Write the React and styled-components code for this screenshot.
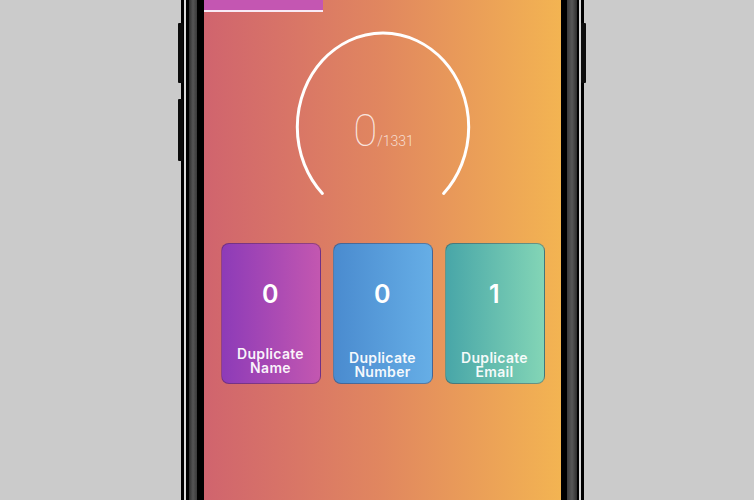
import React from "react";
import styled, { createGlobalStyle } from "styled-components";

const GlobalStyle = createGlobalStyle`
  html, body { margin: 0; padding: 0; background: #cbcbcb; overflow: hidden; }
  body { font-family: "Inter", "Liberation Sans", sans-serif; }
  * { box-sizing: border-box; }
`;

const Stage = styled.div`
  display: flex;
  justify-content: center;
  height: 500px;
  padding-left: 11px;
  overflow: hidden;
`;

const Phone = styled.div`
  position: relative;
  display: flex;
  padding: 0 23px;
  height: 500px;
  background: linear-gradient(
    90deg,
    #000 0 3px,
    #d9d9d9 3px 5px,
    #000 5px 8px,
    #2e2e2e 8px,
    #555 12px,
    #3a3a3a 16px,
    #000 16px 23px,
    transparent 23px calc(100% - 23px),
    #000 calc(100% - 23px) calc(100% - 17px),
    #3a3a3a calc(100% - 17px),
    #585858 calc(100% - 12px),
    #2e2e2e calc(100% - 7px),
    #000 calc(100% - 7px) calc(100% - 5px),
    #d9d9d9 calc(100% - 5px) calc(100% - 3px),
    #000 calc(100% - 3px) 100%
  );
`;

const SideButton = styled.span`
  position: absolute;
  top: ${(p) => p.$top}px;
  height: ${(p) => p.$h}px;
  width: 5px;
  background: #0c0c0c;
  border-radius: 1px;
  ${(p) => (p.$right ? "right: -2px;" : "left: -3px;")}
`;

const Screen = styled.div`
  width: 357px;
  height: 500px;
  display: flex;
  flex-direction: column;
  align-items: center;
  background: linear-gradient(90deg, #d0646e 0%, #e1875f 50%, #f3b452 100%);
`;

const TopBar = styled.div`
  align-self: flex-start;
  width: 119px;
  height: 12px;
  background: #c456b2;
  border-bottom: 2px solid rgba(255, 255, 255, 0.88);
`;

const GaugeWrap = styled.div`
  position: relative;
  margin-top: 18px;
  width: 176px;
  height: 194px;
`;

const GaugeText = styled.div`
  position: absolute;
  top: 79px;
  left: 0;
  right: 0;
  display: flex;
  justify-content: center;
  align-items: baseline;
  font-family: "Roboto", "Lato", sans-serif;
  font-weight: 100;
  line-height: 44px;
  color: rgba(255, 255, 255, 0.8);
  padding-left: 2px;
`;

const Big = styled.span`
  font-size: 44px;
`;

const Small = styled.span`
  font-size: 14px;
  font-weight: 300;
  color: rgba(255, 255, 255, 0.72);
`;

const Cards = styled.div`
  display: flex;
  gap: 12px;
  margin-top: 19px;
`;

const Card = styled.div`
  width: 100px;
  height: 141px;
  border-radius: 8px;
  border: 1px solid rgba(60, 30, 40, 0.35);
  background: ${(p) => p.$bg};
  display: flex;
  flex-direction: column;
  align-items: center;
  padding-top: 38px;
  padding-bottom: ${(p) => p.$pb}px;
  color: #fff;
`;

const Count = styled.div`
  font-size: 25px;
  font-weight: 600;
  line-height: 24px;
  letter-spacing: 0.5px;
`;

const Label = styled.div`
  margin-top: auto;
  font-size: 14px;
  font-weight: 600;
  line-height: 14px;
  letter-spacing: 0.3px;
  text-align: center;
  color: rgba(255, 255, 255, 0.95);
`;

const cards = [
  { n: 0, l1: "Duplicate", l2: "Name", bg: "linear-gradient(90deg, #8d3bb8, #c357b0)", pb: 8 },
  { n: 0, l1: "Duplicate", l2: "Number", bg: "linear-gradient(90deg, #4a8bcf, #66aee6)", pb: 4 },
  { n: 1, l1: "Duplicate", l2: "Email", bg: "linear-gradient(90deg, #48a6a8, #83d5b6)", pb: 4 },
];

export default function App() {
  return (
    <>
      <GlobalStyle />
      <Stage>
        <Phone>
          <SideButton $top={23} $h={60} />
          <SideButton $top={99} $h={62} />
          <SideButton $right $top={23} $h={60} />
          <Screen>
            <TopBar />
            <GaugeWrap>
              <svg width="176" height="194" viewBox="0 0 176 194">
                <path
                  d="M27.4 163.5 A85.7 94 0 1 1 148.6 163.5"
                  fill="none"
                  stroke="#fff"
                  strokeWidth="3"
                  strokeLinecap="round"
                />
              </svg>
              <GaugeText>
                <Big>0</Big>
                <Small>/1331</Small>
              </GaugeText>
            </GaugeWrap>
            <Cards>
              {cards.map((c, i) => (
                <Card key={i} $bg={c.bg} $pb={c.pb}>
                  <Count>{c.n}</Count>
                  <Label>
                    {c.l1}
                    <br />
                    {c.l2}
                  </Label>
                </Card>
              ))}
            </Cards>
          </Screen>
        </Phone>
      </Stage>
    </>
  );
}
